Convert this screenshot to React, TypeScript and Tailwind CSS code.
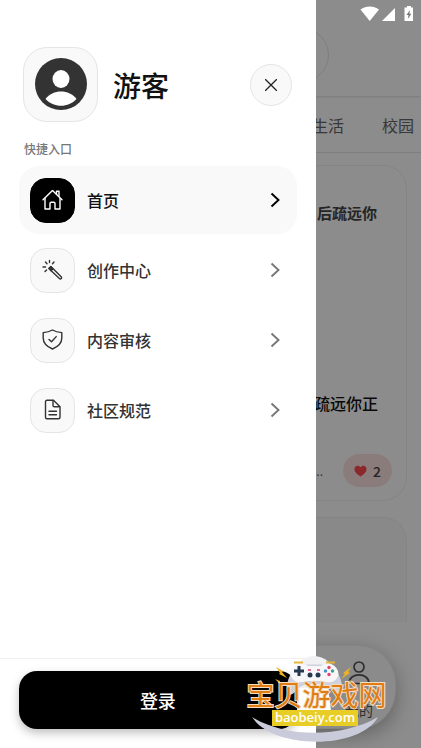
import type { ReactNode } from 'react';

const FONT = "font-['Noto_Sans_CJK_SC','Noto_Sans',sans-serif]";

function HomeIcon() {
  return (
    <svg className="size-6" viewBox="0 0 24 24" fill="none" stroke="currentColor" strokeWidth="1.4" strokeLinejoin="round" strokeLinecap="round">
      <path d="M2 11.8 11.500 2.500l9.500 9.300" />
      <path d="M4 10.300V21h5v-5.500c0-.8.600-1.300 1.300-1.300h2.400c.7 0 1.300.5 1.300 1.300V21h5V10.300" />
      <path d="M15.500 6V3.200H18v5" />
    </svg>
  );
}

function WandIcon() {
  return (
    <svg className="size-6" viewBox="0 0 24 24" fill="none" stroke="currentColor" strokeWidth="1.400" strokeLinejoin="round" strokeLinecap="round">
      <path d="m7.800 10.600 2.100-2 10.300 10.200c.6.600.6 1.300.1 1.800-.6.600-1.300.6-1.900 0z" />
      <path d="m8.100 10.400 1.700-1.600 2.200 2-1.900 1.900z" fill="currentColor" />
      <path d="M8.500 2.500v2M4.500 4l1.500 1.800M13 4l-1.500 1.800M2 9h2.500M4 13.500l1.600-1.500" />
    </svg>
  );
}

function ShieldIcon() {
  return (
    <svg className="size-6" viewBox="0 0 24 24" fill="none" stroke="currentColor" strokeWidth="1.400" strokeLinejoin="round" strokeLinecap="round">
      <path d="M11.500 2c2.700 1.500 5.600 2.300 9.300 2.600v5.400c0 5-3.800 8.700-9.300 11-5.500-2.300-9.300-6-9.300-11V4.600C5.900 4.300 8.800 3.500 11.500 2z" />
      <path d="m8 11.500 2.500 2.300 4.700-5.200" />
    </svg>
  );
}

function DocIcon() {
  return (
    <svg className="size-6" viewBox="0 0 24 24" fill="none" stroke="currentColor" strokeWidth="1.400" strokeLinejoin="round" strokeLinecap="round">
      <path d="M12.500 2.200H6A1.500 1.500 0 0 0 4.500 3.700v15.600A1.500 1.500 0 0 0 6 20.800h11.500a1.500 1.500 0 0 0 1.500-1.500V8.700z" />
      <path d="M12 2.500v5c0 .8.500 1.300 1.300 1.300h5.200M8 13.200h7.500M8 16.700h7.500" />
    </svg>
  );
}

function Chevron() {
  return (
    <svg className="h-4 w-3" viewBox="0 0 12 16" fill="none" stroke="currentColor" strokeWidth="1.900">
      <path d="m2.500 1.500 7 6.500-7 6.500" />
    </svg>
  );
}

type EntryProps = { icon: ReactNode; label: string; active?: boolean };

function Entry({ icon, label, active }: EntryProps) {
  return (
    <li>
      <a
        href="#"
        className={`flex h-[68px] items-center gap-3 rounded-[20px] px-[11px] ${active ? 'bg-[#f9f9f9] text-[#111]' : 'text-[#333]'}`}
      >
        <span
          className={`flex size-[45px] items-center justify-center rounded-2xl border ${active ? 'border-black bg-black text-white' : 'border-[#e5e5e5] bg-[#f9f9f9]'}`}
        >
          {icon}
        </span>
        <span className="flex-1 text-base font-medium">{label}</span>
        <span className={`mr-[5px] ${active ? 'text-black' : 'text-[#777]'}`}>
          <Chevron />
        </span>
      </a>
    </li>
  );
}

function StatusBar() {
  return (
    <svg className="absolute top-0 right-0 h-7 w-[71px] text-white" viewBox="0 0 71 28" fill="currentColor">
      <path d="M10.500 9.500c5.500-4 13-4 18.500 0L19.700 21z" />
      <path d="M45 8v13H32z" />
      <path d="M54.500 7.500h2.500V6h4v1.500h2V21h-8.500z" />
      <path d="m60 10-3.500 5h2l-.700 4 3.600-5.200h-2z" fill="#777" />
    </svg>
  );
}

function Feed() {
  return (
    <div className="min-h-screen bg-white">
      <header className="flex h-24 pt-7 shadow-[0_1px_2px_rgba(0,0,0,0.12)]">
        <div className="mr-[92px] ml-4 h-[54px] flex-1 rounded-full border border-[#e6e6e6]" />
      </header>
      <nav className="flex h-[57px] items-center justify-end gap-[38px] border-b border-[#e6e6e6] pt-[2px] pr-[7px] text-base text-[#666]">
        <a href="#">生活</a>
        <a href="#">校园</a>
      </nav>
      <main className="flex flex-col gap-4 px-[14px] pt-3">
        <article className="flex h-[336px] flex-col items-end rounded-3xl border border-[#f0f0f0] pt-[35px] pr-[14px] pb-[13px]">
          <p className="pr-[15px] text-[15px] leading-6 font-bold text-[#444]">后疏远你</p>
          <p className="mt-auto pr-[14px] text-base leading-6 font-medium text-[#111]">疏远你正</p>
          <div className="mt-[39px] flex items-center gap-5">
            <span className="text-xs text-[#666]">...</span>
            <button className="flex h-[33px] w-[49px] items-center justify-center gap-[6px] rounded-full bg-[#fee2e2] text-sm font-medium text-[#444]">
              <svg className="h-3 w-[13px]" viewBox="0 0 14 12" fill="#ff4850">
                <path d="M7 12C3 9.200.5 7 .5 4 .5 0 5-1 7 2c2-3 6.500-2 6.500 2 0 3-2.500 5.200-6.500 8z" />
              </svg>
              2
            </button>
          </div>
        </article>
        <article className="h-[105px] rounded-t-3xl border border-b-0 border-[#f0f0f0] bg-[#fafafa]" />
      </main>
      {/* Floating tab bar */}
      <div className="absolute right-[25px] bottom-[19px] left-[25px] flex h-[84px] justify-end rounded-[38px] border border-[#f0f0f0] bg-[#fdfdfd] pr-[22px] shadow-[0_6px_20px_rgba(0,0,0,0.3)]">
        <a href="#" className="flex flex-col items-center pt-3 text-sm text-[#555]">
          <svg className="h-7 w-6" viewBox="0 0 24 28" fill="none" stroke="currentColor" strokeWidth="1.700">
            <circle cx="12" cy="9" r="5" />
            <path d="M2 25.500c0-11.500 20-11.500 20 0z" strokeLinejoin="round" />
          </svg>
          <span className="mt-3 leading-6">我的</span>
        </a>
      </div>
    </div>
  );
}

function Watermark() {
  return (
    <div className="pointer-events-none absolute right-[34px] bottom-1 flex h-[90px] w-[141px] flex-col items-center">
      <svg className="absolute inset-0 size-full" viewBox="0 0 141 90">
        <path d="M6 63c34 21 90 21 126 0-18 33-105 33-126 0z" fill="#c9cbda" />
        <circle cx="68" cy="22" r="20" fill="#f1f1f3" />
        <path d="M54 34h28l4 30H51z" fill="#fff" />
        <path d="M50 12c4-2 33-2 37 0 7 8 10 18 9 26-1 4-5 3-8 0-5-7-9-8-19-8s-15 1-20 8c-3 3-7 4-8 0-1-8 2-18 9-26z" fill="#cfd1dc" />
        <path d="M50 11c5-3 9-1 12 1h13c3-2 7-4 12-1 5 3 7 9 4 13-3 5-9 5-14 3H60c-5 2-11 2-14-3-3-4-1-10 4-13z" fill="#f7f7fa" />
        <path d="M48 8.500h9M80 8.500h9" stroke="#e8b53c" strokeWidth="1.800" fill="none" />
        <path d="M51.500 12h3v3.500H58v3h-3.500V22h-3v-3.500H48v-3h3.500z" fill="#253951" />
        <circle cx="64" cy="21" r="2.500" fill="#253951" />
        <circle cx="72" cy="21" r="2.500" fill="#253951" />
        <path d="M62 16h3M71 16h3" stroke="#e4416b" strokeWidth="1.500" />
        <circle cx="83" cy="13.500" r="1.700" fill="#e4416b" />
        <circle cx="86.500" cy="17" r="1.700" fill="#38a18c" />
        <circle cx="79.500" cy="17" r="1.700" fill="#4a8fd0" />
        <circle cx="83" cy="20.500" r="1.700" fill="#e4416b" />
        <path d="m30 13 7 4-1 1 5 6-8-4 1-1zM29 25l5 2v1l3 2-5-1v-1zM105 13l-8 6 2 1-4 5 9-6-2-1zM105 26l-5 2v1l-3 2 6-1v-1z" fill="#efb321" />
      </svg>
      <span className="relative mt-6 text-[28px] leading-8 whitespace-nowrap text-[#e07c14] [-webkit-text-stroke:2px_#f3dcc0] [paint-order:stroke_fill]">
        宝贝游戏网
      </span>
      <span className="relative mr-[3px] h-4 w-[86px] bg-[#e9cd27] text-center font-['Open_Sans',sans-serif] text-[13px] leading-[15px] font-semibold text-white">
        baobeiy.com
      </span>
    </div>
  );
}

export default function App() {
  return (
    <div className={`relative min-h-screen overflow-hidden ${FONT}`}>
      <Feed />
      <div className="absolute inset-0 bg-black/45" />
      <StatusBar />
      <aside className="absolute inset-y-0 left-0 flex w-3/4 flex-col bg-white">
        <div className="flex items-center gap-[15px] pt-[47px] pr-6 pl-[23px]">
          <div className="flex size-[75px] items-center justify-center rounded-3xl border border-[#e5e5e5] bg-[#f9f9f9] pb-[2px]">
            <svg className="size-[52px]" viewBox="0 0 52 52">
              <circle cx="26" cy="26" r="26" fill="#333" />
              <ellipse cx="26" cy="21" rx="8.500" ry="9" fill="#fff" />
              <path d="M10.500 41c7-10 24-10 31 0-8 9-23 9-31 0z" fill="#fff" />
            </svg>
          </div>
          <h1 className="flex-1 text-[28px] font-medium text-[#111]">游客</h1>
          <button className="flex size-[42px] items-center justify-center rounded-full border border-[#e5e5e5] bg-[#f9f9f9]" aria-label="关闭">
            <svg className="size-3" viewBox="0 0 12 12" stroke="#222" strokeWidth="1.300">
              <path d="m0 0 12 12M12 0 0 12" />
            </svg>
          </button>
        </div>
        <h2 className="mt-[18px] pl-6 text-xs leading-[18px] font-medium text-[#777]">快捷入口</h2>
        <ul className="mt-2 flex flex-1 flex-col gap-[2px] px-[19px]">
          <Entry icon={<HomeIcon />} label="首页" active />
          <Entry icon={<WandIcon />} label="创作中心" />
          <Entry icon={<ShieldIcon />} label="内容审核" />
          <Entry icon={<DocIcon />} label="社区规范" />
        </ul>
        <div className="border-t border-[#f0f0f0] px-[19px] pt-3 pb-[19px]">
          <button className="h-[58px] w-full rounded-[18px] bg-black text-lg font-medium text-white shadow-[0_4px_10px_rgba(0,0,0,0.25)]">登录</button>
        </div>
      </aside>
      <Watermark />
    </div>
  );
}
